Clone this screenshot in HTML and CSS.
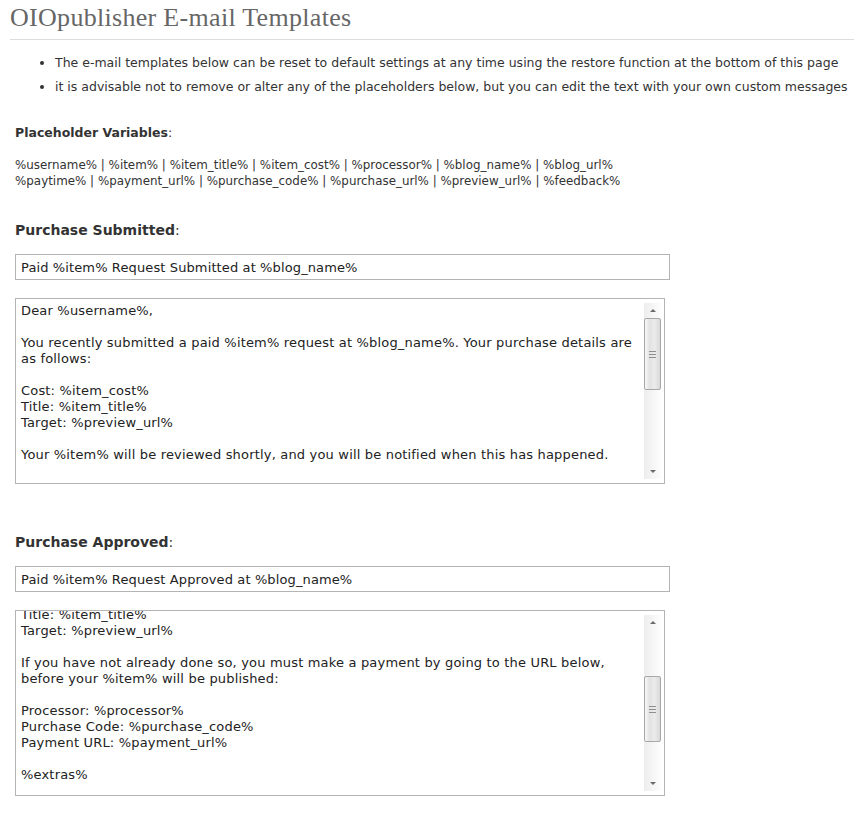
FILE: index.html
```html
<!DOCTYPE html>
<html lang="en">
<head>
<meta charset="utf-8">
<title>OIOpublisher E-mail Templates</title>
<link rel="stylesheet" href="styles.css">
</head>
<body>
<div class="page">
  <h1 class="title">OIOpublisher E-mail Templates</h1>
  <ul class="notes">
    <li>The e-mail templates below can be reset to default settings at any time using the restore function at the bottom of this page</li>
    <li>it is advisable not to remove or alter any of the placeholders below, but you can edit the text with your own custom messages</li>
  </ul>
  <div class="content">
    <h3 class="vars-title">Placeholder Variables<span class="colon">:</span></h3>
    <p class="vars">%username% | %item% | %item_title% | %item_cost% | %processor% | %blog_name% | %blog_url%<br>%paytime% | %payment_url% | %purchase_code% | %purchase_url% | %preview_url% | %feedback%</p>

    <div class="template">
      <h3 class="tpl-title">Purchase Submitted<span class="colon">:</span></h3>
      <input class="subject" type="text" value="Paid %item% Request Submitted at %blog_name%">
      <div class="editor">
        <textarea class="body-text" rows="11">Dear %username%,

You recently submitted a paid %item% request at %blog_name%. Your purchase details are as follows:

Cost: %item_cost%
Title: %item_title%
Target: %preview_url%

Your %item% will be reviewed shortly, and you will be notified when this has happened.


If your %item% is approved, you will receive a further e-mail with details of how to complete your payment.

You can check the status of your purchase at any time by visiting:

%purchase_url%

If you have any questions, please reply to this e-mail.

Regards,
%blog_name%</textarea>
        <div class="scrollbar" aria-hidden="true">
          <div class="sb-btn sb-up"></div>
          <div class="sb-track"><div class="sb-thumb" style="top:0;height:72px"></div></div>
          <div class="sb-btn sb-down"></div>
        </div>
      </div>
    </div>

    <div class="template">
      <h3 class="tpl-title">Purchase Approved<span class="colon">:</span></h3>
      <input class="subject" type="text" value="Paid %item% Request Approved at %blog_name%">
      <div class="editor">
        <textarea class="body-text scrolled" rows="11">Dear %username%,

Good news! Your paid %item% request at %blog_name% has been approved.

Your purchase details are as follows:

Cost: %item_cost%
Title: %item_title%
Target: %preview_url%

If you have not already done so, you must make a payment by going to the URL below, before your %item% will be published:

Processor: %processor%
Purchase Code: %purchase_code%
Payment URL: %payment_url%

%extras%

If you have any questions, please reply to this e-mail.

Regards,
%blog_name%
%blog_url%</textarea>
        <div class="scrollbar" aria-hidden="true">
          <div class="sb-btn sb-up"></div>
          <div class="sb-track"><div class="sb-thumb" style="top:46px;height:66px"></div></div>
          <div class="sb-btn sb-down"></div>
        </div>
      </div>
    </div>
  </div>
</div>
<script src="script.js"></script>
</body>
</html>
```

FILE: styles.css
```css
html, body {
  margin: 0;
  padding: 0;
  background: #fff;
}
body {
  font-family: "DejaVu Sans", Verdana, sans-serif;
  color: #333;
}
.page {
  padding-left: 10px;
}
.title {
  margin: 0;
  padding: 3px 0 6px;
  font-family: "Liberation Serif", Georgia, serif;
  font-weight: normal;
  font-size: 26px;
  letter-spacing: 0.3px;
  line-height: 30px;
  color: #666;
  border-bottom: 1px solid #dcdcdc;
}
.notes {
  margin: 11px 0 0;
  padding-left: 45px;
  font-size: 12.5px;
  line-height: 24px;
}
.content {
  padding-left: 5px;
}
.vars-title {
  margin: 24px 0 0;
  font-size: 12.5px;
  line-height: 20px;
  font-weight: bold;
}
.colon {
  font-weight: normal;
}
.vars {
  margin: 14px 0 0;
  font-size: 11.9px;
  line-height: 16px;
}
.template {
  display: flex;
  flex-direction: column;
  align-items: flex-start;
}
.tpl-title {
  margin: 31px 0 0;
  font-size: 14px;
  line-height: 20px;
  font-weight: bold;
}
.template + .template .tpl-title {
  margin-top: 48px;
}
.subject {
  margin: 14px 0 0;
  box-sizing: border-box;
  width: 655px;
  height: 26px;
  padding: 0 5px;
  border: 1px solid #b4b4b4;
  font-family: "DejaVu Sans", Verdana, sans-serif;
  font-size: 13px;
  letter-spacing: 0.12px;
  color: #222;
  background: #fff;
  outline: none;
}
.editor {
  position: relative;
  margin: 18px 0 0;
  width: 650px;
  height: 186px;
}
.body-text {
  display: block;
  box-sizing: border-box;
  width: 650px;
  height: 186px;
  margin: 0;
  padding: 4px 24px 4px 5px;
  border: 1px solid #b4b4b4;
  font-family: "DejaVu Sans", Verdana, sans-serif;
  font-size: 13px;
  letter-spacing: 0.18px;
  line-height: 16px;
  color: #222;
  background: #fff;
  resize: none;
  overflow: hidden;
  outline: none;
}
.scrollbar {
  position: absolute;
  top: 5px;
  bottom: 5px;
  right: 4px;
  width: 17px;
  display: flex;
  flex-direction: column;
  background: linear-gradient(to right, #ededed, #f6f6f6 55%, #fdfdfd);
}
.sb-btn {
  flex: none;
  height: 15px;
  display: flex;
  align-items: center;
  justify-content: center;
}
.sb-btn::before {
  content: "";
  width: 0;
  height: 0;
  border-left: 3px solid transparent;
  border-right: 3px solid transparent;
}
.sb-up::before {
  border-bottom: 3px solid #6a6a6a;
}
.sb-down::before {
  border-top: 3px solid #6a6a6a;
}
.sb-track {
  flex: 1;
  position: relative;
}
.sb-thumb {
  position: absolute;
  left: 0;
  right: 0;
  box-sizing: border-box;
  border: 1px solid #a8a8a8;
  border-radius: 2px;
  background: linear-gradient(to right, #f8f8f8, #e2e2e2 30%, #ebebeb 65%, #d8d8d8);
}
.sb-thumb::after {
  content: "";
  position: absolute;
  left: 4px;
  right: 4px;
  top: 50%;
  height: 7px;
  margin-top: -3px;
  background: repeating-linear-gradient(#8f8f8f 0 1px, transparent 1px 3px);
}
```

FILE: script.js
```js
document.querySelectorAll('textarea.scrolled').forEach(function (t) {
  t.scrollTop = 120;
});
```
